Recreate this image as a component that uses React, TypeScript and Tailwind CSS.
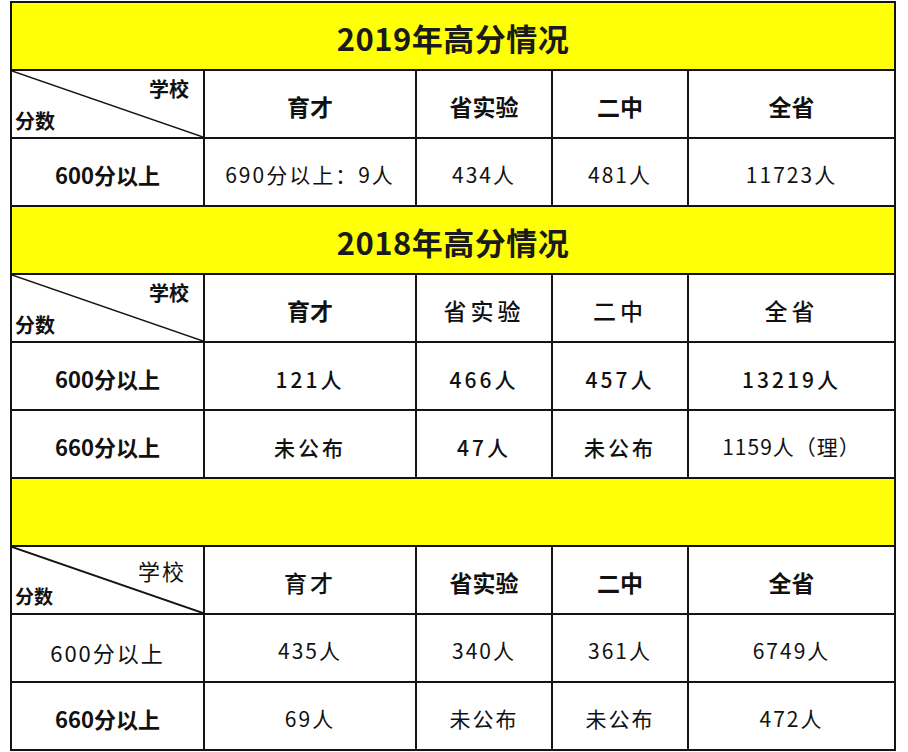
import React from "react";

const B = "border-[#141414]";

function Cell({ children, cls = "" }: { children?: React.ReactNode; cls?: string }) {
  return (
    <div className={`h-[68px] border-r-2 border-b-2 ${B} flex items-center justify-center text-[#111] leading-none ${cls}`}>
      {children}
    </div>
  );
}

function Title({ children }: { children?: React.ReactNode }) {
  return (
    <div className={`col-span-5 h-[68px] border-r-2 border-b-2 ${B} bg-[#ffff05] flex items-center justify-center`}>
      <span className="text-[31px] font-bold tracking-[0.5px] text-[#1a1a1a] leading-none pt-[2px]">{children}</span>
    </div>
  );
}

function Diag({ alt = false }: { alt?: boolean }) {
  return (
    <div className={`relative h-[68px] border-r-2 border-b-2 ${B}`}>
      <svg className="absolute inset-0 w-full h-full" preserveAspectRatio="none" viewBox="0 0 191 66">
        <line x1="0" y1="0" x2="191" y2="66" stroke="#141414" strokeWidth={alt ? 2 : 1.5} />
      </svg>
      {alt ? (
        <div className="relative h-full flex flex-col justify-between pt-[12px] pb-[8px] pl-[3px] pr-[17px] text-[#111] leading-none">
          <span className="self-end text-[22px] tracking-[2px]">学校</span>
          <span className="self-start text-[19px] font-bold">分数</span>
        </div>
      ) : (
        <div className="relative h-full flex flex-col justify-between pt-[8px] pb-[6px] pl-[3px] pr-[14px] text-[#111] leading-none">
          <span className="self-end text-[20px] font-bold">学校</span>
          <span className="self-start text-[20px] font-bold">分数</span>
        </div>
      )}
    </div>
  );
}

export default function App() {
  const hb = "text-[23px] font-bold pt-[4px]";
  const hm = "text-[23px] font-medium tracking-[4px] pt-[4px]";
  const lb = "text-[22px] font-bold pt-[4px]";
  const v1 = "text-[21px] tracking-[2px] pt-[4px]";
  const v2 = "text-[21px] font-medium tracking-[3px] pt-[6px]";
  return (
    <div className="w-[908px] h-[752px] bg-white overflow-hidden font-['Noto_Sans_CJK_SC',sans-serif]">
      <div className={`ml-[10px] mt-[1px] w-[886px] border-l-2 border-t-2 ${B} grid grid-cols-[193px_212px_136px_136px_207px]`}>
        <Title>2019年高分情况</Title>
        <Diag />
        <Cell cls={hb}>育才</Cell>
        <Cell cls={hb}>省实验</Cell>
        <Cell cls={hb}>二中</Cell>
        <Cell cls={hb}>全省</Cell>
        <Cell cls={lb}>600分以上</Cell>
        <Cell cls={v1}>690分以上：9人</Cell>
        <Cell cls={v1}>434人</Cell>
        <Cell cls={v1}>481人</Cell>
        <Cell cls={v1}>11723人</Cell>

        <Title>2018年高分情况</Title>
        <Diag />
        <Cell cls={hb}>育才</Cell>
        <Cell cls={hm}>省实验</Cell>
        <Cell cls={hm}>二中</Cell>
        <Cell cls={hm}>全省</Cell>
        <Cell cls={lb}>600分以上</Cell>
        <Cell cls={v2}>121人</Cell>
        <Cell cls={v2}>466人</Cell>
        <Cell cls={v2}>457人</Cell>
        <Cell cls={v2}>13219人</Cell>
        <Cell cls={lb}>660分以上</Cell>
        <Cell cls={v2}>未公布</Cell>
        <Cell cls={v2}>47人</Cell>
        <Cell cls={v2}>未公布</Cell>
        <Cell cls="text-[21px] tracking-[1px] pt-[4px]">1159人（理）</Cell>

        <Title>{"\u00a0"}</Title>
        <Diag alt />
        <Cell cls="text-[23px] font-medium tracking-[3px] pt-[4px]">育才</Cell>
        <Cell cls={hb}>省实验</Cell>
        <Cell cls={hb}>二中</Cell>
        <Cell cls={hb}>全省</Cell>
        <Cell cls="text-[22px] tracking-[2px] pt-[8px]">600分以上</Cell>
        <Cell cls={v1}>435人</Cell>
        <Cell cls={v1}>340人</Cell>
        <Cell cls={v1}>361人</Cell>
        <Cell cls={v1}>6749人</Cell>
        <Cell cls={lb}>660分以上</Cell>
        <Cell cls={v1}>69人</Cell>
        <Cell cls={v1}>未公布</Cell>
        <Cell cls={v1}>未公布</Cell>
        <Cell cls={v1}>472人</Cell>
      </div>
    </div>
  );
}
